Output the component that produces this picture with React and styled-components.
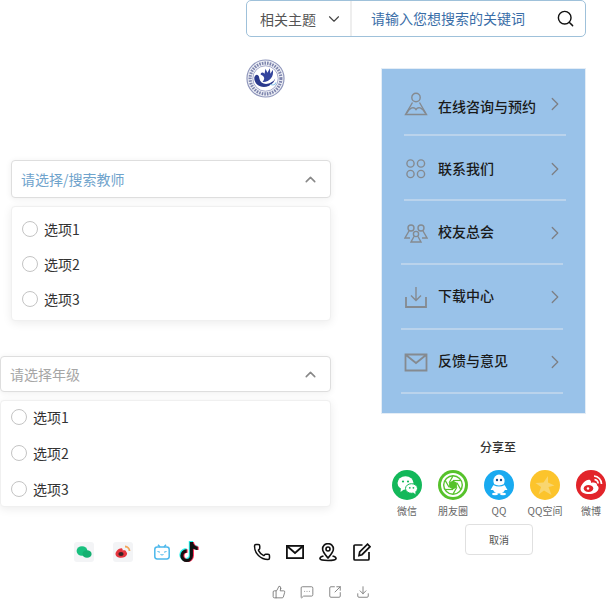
import React from 'react';
import styled, { createGlobalStyle } from 'styled-components';
import {
  ChevronDown, ChevronUp, ChevronRight, Search, Phone,
  ThumbsUp, MessageSquareMore, SquareArrowOutUpRight, Download,
} from 'lucide-react';

const GlobalStyle = createGlobalStyle`
  html, body {
    margin: 0;
    padding: 0;
    background: #fff;
    font-family: "Noto Sans CJK SC", "Noto Sans", sans-serif;
    overflow: hidden;
  }
  * { box-sizing: border-box; }
`;

const Page = styled.div`
  width: 606px;
  height: 600px;
  overflow: hidden;
`;

const Top = styled.div`
  display: flex;
  justify-content: flex-end;
  padding-right: 20px;
`;

const SearchBar = styled.div`
  width: 340px;
  height: 37px;
  display: flex;
  align-items: center;
  border: 1px solid #9fc1da;
  border-radius: 5px;
`;

const TopicSelect = styled.div`
  width: 105px;
  height: 100%;
  display: flex;
  align-items: center;
  padding-left: 13px;
  font-size: 14px;
  color: #555;
  border-right: 2px solid #eeeeee;
  svg { margin-left: 9px; color: #444; }
`;

const Keyword = styled.div`
  flex: 1;
  padding-left: 19px;
  padding-bottom: 1px;
  font-size: 14px;
  color: #3a6ea8;
`;

const SearchIcon = styled(Search)`
  margin-right: 10px;
  color: #111;
`;

const Main = styled.div`
  display: flex;
`;

const LeftCol = styled.div`
  width: 381px;
  flex-shrink: 0;
`;

const Logo = styled.svg`
  display: block;
  width: 39px;
  height: 39px;
  margin: 22px 0 0 246px;
`;

const SelectBox = styled.div`
  width: ${(p) => (p.$indent ? 320 : 331)}px;
  height: ${(p) => (p.$indent ? 38 : 36)}px;
  margin-top: ${(p) => (p.$indent ? 62 : 35)}px;
  margin-left: ${(p) => (p.$indent ? 11 : 0)}px;
  display: flex;
  align-items: center;
  justify-content: space-between;
  padding: 0 11px 0 9px;
  background: #fff;
  border: 1px solid #dedede;
  border-radius: 4px;
  box-shadow: 0 1px 6px rgba(0, 0, 0, 0.07);
  font-size: 14px;
  color: ${(p) => (p.$indent ? '#6fa3cc' : '#a6a6a6')};
  svg { color: #888; }
`;

const OptionList = styled.div`
  width: ${(p) => (p.$indent ? 320 : 331)}px;
  height: ${(p) => (p.$indent ? 115 : 107)}px;
  margin-top: 8px;
  margin-left: ${(p) => (p.$indent ? 11 : 0)}px;
  padding-top: ${(p) => (p.$indent ? 6 : 0)}px;
  overflow: hidden;
  background: #fff;
  border: 1px solid #f0f0f0;
  border-radius: 4px;
  box-shadow: 0 2px 10px rgba(0, 0, 0, 0.08);
`;

const Option = styled.div`
  height: ${(p) => (p.$tall ? 36 : 35)}px;
  display: flex;
  align-items: center;
  padding: 0 0 4px 10px;
  font-size: 14px;
  color: #333;
`;

const Radio = styled.span`
  width: 16px;
  height: 16px;
  margin-right: 6px;
  border: 1px solid #c4c4c4;
  border-radius: 50%;
`;

const ContactRow = styled.div`
  display: flex;
  align-items: center;
  height: 20px;
  margin-top: 35px;
  padding-left: 74px;
`;

const Tile = styled.span`
  width: 20px;
  height: 20px;
  margin-right: ${(p) => p.$gap}px;
  display: flex;
  align-items: center;
  justify-content: center;
  background: #f3f4f6;
  border-radius: 3px;
`;

const Drawn = styled.svg`
  display: block;
  flex-shrink: 0;
  margin-right: ${(p) => p.$gap || 0}px;
`;

const Tiktok = styled(Drawn)`
  filter: drop-shadow(1px 0.6px 0 #fe2c55) drop-shadow(-0.8px -0.6px 0 #25f4ee);
`;

const PhoneIcon = styled(Phone)`
  flex-shrink: 0;
  margin-right: 15px;
  color: #111;
`;

const ActionRow = styled.div`
  display: flex;
  gap: 14px;
  margin-top: 23px;
  padding-left: 272px;
  color: #777;
`;

const RightCol = styled.div`
  width: 225px;
  padding-top: 31px;
`;

const Panel = styled.div`
  width: 205px;
  height: 346px;
  padding-top: 3px;
  background: #99c2e9;
  border: 1px solid #e4edf6;
`;

const MenuRow = styled.div`
  height: 64.4px;
  display: flex;
  align-items: center;
  padding-left: 22px;
  position: relative;
  font-size: 14px;
  font-weight: 500;
  color: #1a1a1a;
  &::after {
    content: '';
    position: absolute;
    left: ${(p) => (p.$shift ? 19 : 22)}px;
    bottom: 0;
    width: 162px;
    height: 2px;
    background: #bad3ec;
  }
`;

const MenuIcon = styled.svg`
  width: 24px;
  height: 24px;
  margin-right: 10px;
  fill: none;
  stroke: #858a90;
  stroke-width: 1.4;
`;

const MenuLabel = styled.span`
  flex: 1;
  padding-top: ${(p) => (p.$nudge > 0 ? p.$nudge * 2 : 0)}px;
  padding-bottom: ${(p) => (p.$nudge < 0 ? -p.$nudge * 2 : 0)}px;
`;

const MenuArrow = styled(ChevronRight)`
  margin-right: 19px;
  color: #7d7f84;
`;

const ShareTitle = styled.div`
  margin-top: 24px;
  width: 234px;
  text-align: center;
  font-size: 12px;
  font-weight: 500;
  color: #333;
  line-height: 18px;
`;

const ShareRow = styled.div`
  display: flex;
  gap: 16px;
  margin-top: 14px;
  margin-left: 11px;
`;

const ShareItem = styled.div`
  width: 30px;
  display: flex;
  flex-direction: column;
  align-items: center;
`;

const ShareCircle = styled.svg`
  width: 30px;
  height: 30px;
  flex-shrink: 0;
  display: block;
`;

const ShareLabel = styled.span`
  margin-top: 4px;
  font-size: 10px;
  line-height: 14px;
  color: #666;
  white-space: nowrap;
`;

const CancelButton = styled.div`
  width: 68px;
  height: 31px;
  margin: 6px 0 0 84px;
  display: flex;
  align-items: center;
  justify-content: center;
  border: 1px solid #e0e0e0;
  border-radius: 4px;
  font-size: 10px;
  color: #555;
`;

const PersonIcon = () => (
  <MenuIcon viewBox="0 0 24 24">
    <circle cx="12" cy="5.5" r="4.2" />
    <path d="M8.5 10.5 L1.5 22.5 H22.5 L15.5 10.5" />
    <path d="M2.5 21.5 C6 15 10 14.5 12 17.5 C14 14.5 18 15 21.5 21.5" />
  </MenuIcon>
);

const DotsIcon = () => (
  <MenuIcon viewBox="0 0 24 24">
    <circle cx="6.5" cy="6.5" r="3.6" />
    <circle cx="17" cy="6.5" r="3.6" />
    <circle cx="6.5" cy="17" r="3.6" />
    <circle cx="17" cy="17" r="3.6" />
  </MenuIcon>
);

const GroupIcon = () => (
  <MenuIcon viewBox="0 0 24 24">
    <circle cx="7" cy="7" r="3" />
    <circle cx="17" cy="7" r="3" />
    <circle cx="12" cy="13" r="2.6" />
    <path d="M5 10 L1 17 H6 M19 10 L23 17 H18 M10 15.5 L7 21 H17 L14 15.5" />
  </MenuIcon>
);

const TrayIcon = () => (
  <MenuIcon viewBox="0 0 24 24">
    <path d="M12 2 V15 M7 10.5 L12 15.5 L17 10.5" />
    <path d="M2 12 V22 H22 V12" strokeWidth="1.8" />
  </MenuIcon>
);

const EnvelopeIcon = () => (
  <MenuIcon viewBox="0 0 24 24">
    <path d="M1.5 4.5 H22.5 V20.5 H1.5 Z M2 5 L12 13 L22 5" strokeWidth="1.8" />
  </MenuIcon>
);

const WechatShare = () => (
  <ShareCircle viewBox="0 0 30 30">
    <circle cx="15" cy="15" r="15" fill="#13b85a" />
    <ellipse cx="13.5" cy="13" rx="8" ry="6.8" fill="#fff" />
    <path d="M9 17 L8.5 22 L14 18 Z" fill="#fff" />
    <circle cx="11" cy="11.5" r="1.1" fill="#13b85a" />
    <circle cx="16" cy="11.5" r="1.1" fill="#13b85a" />
    <ellipse cx="19.5" cy="18.5" rx="6" ry="4.8" fill="#fff" stroke="#13b85a" strokeWidth="1" />
    <path d="M21 22 L23.5 24.5 L23.2 21 Z" fill="#fff" />
    <circle cx="17.8" cy="17.8" r="0.9" fill="#13b85a" />
    <circle cx="21.4" cy="17.8" r="0.9" fill="#13b85a" />
  </ShareCircle>
);

const MomentsShare = () => (
  <ShareCircle viewBox="0 0 30 30">
    <circle cx="15" cy="15" r="15" fill="#56c22b" />
    <circle cx="15" cy="15" r="11" fill="none" stroke="#fff" strokeWidth="2" />
    <circle cx="15" cy="15" r="8.6" fill="#fff" />
    {[0, 60, 120, 180, 240, 300].map((deg) => (
      <line
        key={deg}
        x1="15"
        y1="10.5"
        x2="22.6"
        y2="10.5"
        stroke="#56c22b"
        strokeWidth="1.2"
        transform={`rotate(${deg} 15 15)`}
      />
    ))}
    <polygon points="15,10.5 18.9,12.75 18.9,17.25 15,19.5 11.1,17.25 11.1,12.75" fill="#56c22b" />
  </ShareCircle>
);

const QQShare = () => (
  <ShareCircle viewBox="0 0 30 30">
    <circle cx="15" cy="15" r="15" fill="#19aaf0" />
    <ellipse cx="15" cy="11" rx="5.6" ry="6.4" fill="#fff" />
    <ellipse cx="15" cy="18" rx="6.4" ry="5.6" fill="#fff" />
    <path d="M9.5 15 L6.5 20 L9.5 20 Z M20.5 15 L23.5 20 L20.5 20 Z" fill="#fff" />
    <ellipse cx="11" cy="24" rx="3" ry="1.3" fill="#fff" />
    <ellipse cx="19" cy="24" rx="3" ry="1.3" fill="#fff" />
    <circle cx="13" cy="10" r="1.2" fill="#1a4f8a" />
    <circle cx="17" cy="10" r="1.2" fill="#1a4f8a" />
    <path d="M9.5 14.5 Q15 17.5 20.5 14.5" fill="none" stroke="#19aaf0" strokeWidth="1.1" />
  </ShareCircle>
);

const QzoneShare = () => (
  <ShareCircle viewBox="0 0 30 30">
    <circle cx="15" cy="15" r="15" fill="#fcc42c" />
    <polygon points="18,6 18,12.5 24.5,15.5 18.5,17 21.5,25 14,20.5 8.5,24.5 11,17 5.5,13 13.5,12.5" fill="#f9d670" />
  </ShareCircle>
);

const WeiboShare = () => (
  <ShareCircle viewBox="0 0 30 30">
    <circle cx="15" cy="15" r="15" fill="#e2242a" />
    <path d="M4.5 19 C4.5 14 11 8.5 14 10 C15.5 11 15 13 15 13 C18 12 21.5 13 21 15.5 C24 16.5 23.5 24 13 24 C8 24 4.5 22 4.5 19 Z" fill="#fff" />
    <ellipse cx="12.5" cy="18.5" rx="4.8" ry="3.4" fill="#e2242a" />
    <circle cx="12" cy="18.5" r="1.2" fill="#fff" />
    <path d="M18 6 A 8 8 0 0 1 25.5 14 M18.5 9.5 A 4.5 4.5 0 0 1 22.2 13.5" fill="none" stroke="#fff" strokeWidth="1.7" />
  </ShareCircle>
);

const menu = [
  { label: '在线咨询与预约', Icon: PersonIcon, nudge: 2 },
  { label: '联系我们', Icon: DotsIcon, nudge: -0.5 },
  { label: '校友总会', Icon: GroupIcon, shift: true, nudge: -1.5 },
  { label: '下载中心', Icon: TrayIcon, shift: true, nudge: -2 },
  { label: '反馈与意见', Icon: EnvelopeIcon, shift: true, nudge: -2 },
];

const share = [
  { label: '微信', Glyph: WechatShare },
  { label: '朋友圈', Glyph: MomentsShare },
  { label: 'QQ', Glyph: QQShare },
  { label: 'QQ空间', Glyph: QzoneShare },
  { label: '微博', Glyph: WeiboShare },
];

const options = ['选项1', '选项2', '选项3'];

function App() {
  return (
    <Page>
      <GlobalStyle />
      <Top>
        <SearchBar>
          <TopicSelect>
            相关主题
            <ChevronDown size={18} strokeWidth={1.5} />
          </TopicSelect>
          <Keyword>请输入您想搜索的关键词</Keyword>
          <SearchIcon size={19} strokeWidth={1.8} />
        </SearchBar>
      </Top>
      <Main>
        <LeftCol>
          <Logo viewBox="0 0 40 40">
            <circle cx="20" cy="20" r="19" fill="#eef0f6" stroke="#8f96bb" strokeWidth="1.2" />
            <circle cx="20" cy="20" r="15.8" fill="none" stroke="#7d84ad" strokeWidth="3.2" strokeDasharray="1.6 1.1" />
            <circle cx="20" cy="20" r="13" fill="#fff" stroke="#6d74a8" strokeWidth="0.6" />
            <path d="M8.5 19 C8 28 20 33 28 24 C29.5 22 30 20 30 20 C27 26 15 29 13.5 19 C13 15.5 9.5 15 8.5 19 Z" fill="#2b3a8c" />
            <path d="M17 23.5 C24 24 29 18 27.5 11 L25 15 L24.5 9.5 L22 14 L20 10 L19 15 C17 13 15 14 15 16 C17 17 21 19 17 23.5 Z" fill="#34459c" />
            <path d="M25 26 Q29 28 31 24" fill="none" stroke="#8fc6e8" strokeWidth="1.2" />
          </Logo>

          <SelectBox $indent>
            请选择/搜索教师
            <ChevronUp size={17} strokeWidth={2.2} />
          </SelectBox>
          <OptionList $indent>
            {options.map((o) => (
              <Option key={o}>
                <Radio />
                {o}
              </Option>
            ))}
          </OptionList>

          <SelectBox>
            请选择年级
            <ChevronUp size={17} strokeWidth={2.2} />
          </SelectBox>
          <OptionList>
            {options.map((o) => (
              <Option key={o} $tall>
                <Radio />
                {o}
              </Option>
            ))}
          </OptionList>

          <ContactRow>
            <Tile $gap={19}>
              <svg width="16" height="14" viewBox="0 0 16 14">
                <ellipse cx="6" cy="6" rx="5.4" ry="4.8" fill="#18c07e" />
                <ellipse cx="11" cy="9" rx="4.6" ry="3.8" fill="#14b071" />
              </svg>
            </Tile>
            <Tile $gap={21}>
              <svg width="16" height="14" viewBox="0 0 16 14">
                <path d="M0.5 9 C0.5 6 5 2.5 7 3.5 C8 4.2 7.6 5.4 7.6 5.4 C9.5 4.8 11.5 5.5 11.2 7 C13 7.6 12.6 12.8 6 12.8 C3 12.8 0.5 11.2 0.5 9 Z" fill="#e5363f" />
                <ellipse cx="6" cy="9" rx="2.6" ry="2" fill="#3a2326" />
                <path d="M10 1.5 A 4.5 4.5 0 0 1 14.5 6" fill="none" stroke="#f2a65a" strokeWidth="1.8" />
              </svg>
            </Tile>
            <Drawn $gap={10} width="16" height="16" viewBox="0 0 16 16" fill="none" stroke="#4cb8ec" strokeWidth="1.5">
              <rect x="0.8" y="3" width="14.4" height="12" rx="2.4" />
              <path d="M4 0.8 L6 3 M12 0.8 L10 3" />
              <path d="M3.5 7.5 L6 8.2 M12.5 7.5 L10 8.2 M6.5 10.5 Q8 11.5 9.5 10.5" strokeWidth="1" />
            </Drawn>
            <Tiktok $gap={55} width="18" height="20" viewBox="3 2 16.5 19" fill="#111">
              <path d="M12 2 H15 C15.3 4.5 17 6.2 19.5 6.5 V9.5 C17.8 9.5 16.3 9 15 8.1 V15 A6 6 0 1 1 9 9 V12.1 A3 3 0 1 0 12 15 Z" />
            </Tiktok>
            <PhoneIcon size={18} strokeWidth={2} />
            <Drawn $gap={15} width="18" height="14" viewBox="0 0 18 14" fill="none" stroke="#111" strokeWidth="1.8">
              <rect x="0.9" y="0.9" width="16.2" height="12.2" />
              <path d="M1 1 L9 8 L17 1" />
            </Drawn>
            <Drawn $gap={16} width="18" height="19" viewBox="0 0 18 19" fill="none" stroke="#111" strokeWidth="1.6">
              <path d="M9 15 C6 11.5 3.6 9 3.6 6 A5.4 5.4 0 0 1 14.4 6 C14.4 9 12 11.5 9 15 Z" />
              <circle cx="9" cy="6" r="2" />
              <path d="M4.5 13 C1.5 13.8 0.8 15 1 15.8 C1.5 18 16.5 18 17 15.8 C17.2 15 16.5 13.8 13.5 13" />
            </Drawn>
            <Drawn width="18" height="18" viewBox="0 0 18 18" fill="none" stroke="#111" strokeWidth="1.7">
              <path d="M9.5 2 H2 Q1 2 1 3 V16 Q1 17 2 17 H15 Q16 17 16 16 V9" />
              <path d="M14.5 1.2 L17 3.7 L9 11.7 L6 12.5 L6.7 9 Z" />
            </Drawn>
          </ContactRow>
          <ActionRow>
            <ThumbsUp size={14} strokeWidth={1.5} />
            <MessageSquareMore size={14} strokeWidth={1.5} />
            <SquareArrowOutUpRight size={14} strokeWidth={1.5} />
            <Download size={14} strokeWidth={1.5} />
          </ActionRow>
        </LeftCol>

        <RightCol>
          <Panel>
            {menu.map(({ label, Icon, shift, nudge }) => (
              <MenuRow key={label} $shift={shift}>
                <Icon />
                <MenuLabel $nudge={nudge}>{label}</MenuLabel>
                <MenuArrow size={22} strokeWidth={1.4} />
              </MenuRow>
            ))}
          </Panel>
          <ShareTitle>分享至</ShareTitle>
          <ShareRow>
            {share.map(({ label, Glyph }) => (
              <ShareItem key={label}>
                <Glyph />
                <ShareLabel>{label}</ShareLabel>
              </ShareItem>
            ))}
          </ShareRow>
          <CancelButton>取消</CancelButton>
        </RightCol>
      </Main>
    </Page>
  );
}

export default App;
